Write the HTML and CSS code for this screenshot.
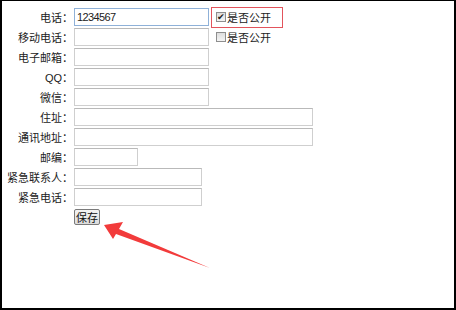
FILE: index.html
```html
<!DOCTYPE html>
<html lang="zh-CN">
<head>
    <meta charset="UTF-8">
    <title>联系方式</title>
    <link rel="stylesheet" href="styles.css">
</head>
<body>

<div class="frame">
    <div class="form">
        <div class="row">
            <label class="label">电话：</label>
            <input class="field field-focus w-md" type="text" value="1234567">
            <span class="public public-marked">
                <input type="checkbox" checked>是否公开
            </span>
        </div>
        <div class="row">
            <label class="label">移动电话：</label>
            <input class="field w-md" type="text">
            <span class="public">
                <input type="checkbox">是否公开
            </span>
        </div>
        <div class="row">
            <label class="label">电子邮箱：</label>
            <input class="field w-md" type="text">
        </div>
        <div class="row">
            <label class="label">QQ：</label>
            <input class="field w-md" type="text">
        </div>
        <div class="row">
            <label class="label">微信：</label>
            <input class="field w-md" type="text">
        </div>
        <div class="row">
            <label class="label">住址：</label>
            <input class="field w-lg" type="text">
        </div>
        <div class="row">
            <label class="label">通讯地址：</label>
            <input class="field w-lg" type="text">
        </div>
        <div class="row">
            <label class="label">邮编：</label>
            <input class="field w-xs" type="text">
        </div>
        <div class="row">
            <label class="label">紧急联系人：</label>
            <input class="field w-sm" type="text">
        </div>
        <div class="row">
            <label class="label">紧急电话：</label>
            <input class="field w-sm" type="text">
        </div>
        <div class="actions">
            <button class="save">保存</button>
        </div>
    </div>

    <!-- 标注箭头 -->
    <svg class="arrow" width="456" height="310" viewBox="0 0 456 310">
        <path d="M102,224 L121,221 L117,228 L208,267 L114,233 L111,238 Z" fill="#f23b3b"/>
    </svg>
</div>

</body>
</html>
```

FILE: styles.css
```css
body {
    margin: 0;
    background: #fff;
    font-family: "Liberation Sans", "Noto Sans CJK SC", sans-serif;
    font-size: 11px;
    color: #222;
}
.frame {
    position: relative;
    width: 456px;
    height: 310px;
    box-sizing: border-box;
    border: 2px solid #000;
    border-top-width: 1px;
    background: #fff;
}
.form {
    padding-top: 6px;
}
.row {
    display: flex;
    align-items: center;
    height: 20px;
}
.label {
    width: 71px;
    margin-right: 1px;
    text-align: right;
    white-space: nowrap;
}
.field {
    height: 18px;
    box-sizing: border-box;
    margin: 0;
    padding: 0 2px;
    border: 1px solid #cfcfcf;
    border-top-color: #b9b9b9;
    font-family: "Liberation Sans", sans-serif;
    font-size: 11px;
    letter-spacing: -0.6px;
    color: #222;
    background: #fff;
    outline: none;
}
.field-focus {
    border-color: #8fb1d8;
}
.w-xs { width: 64px; }
.w-sm { width: 128px; }
.w-md { width: 135px; }
.w-lg { width: 239px; }
.public {
    display: flex;
    align-items: center;
    height: 19px;
    margin-left: 7px;
    white-space: nowrap;
}
.public-marked {
    width: 72px;
    height: 21px;
    margin-left: 2px;
    padding-left: 4px;
    box-sizing: border-box;
    border: 1px solid #e2545c;
}
.public input {
    appearance: none;
    position: relative;
    width: 10px;
    height: 10px;
    box-sizing: border-box;
    margin: 0 1px 0 0;
    border: 1px solid #8e8e8e;
    background: linear-gradient(#dedede, #f4f4f4);
}
.public input:checked::after {
    content: "✔";
    position: absolute;
    left: 0;
    top: -2px;
    font-size: 9px;
    line-height: 12px;
    color: #222;
}
.actions {
    padding: 2px 0 0 72px;
}
.save {
    height: 16px;
    margin: 0;
    padding: 0 1px;
    border: 1px solid #7a7a7a;
    border-radius: 2px;
    background: linear-gradient(#f4f4f4, #dcdcdc);
    font-family: "Noto Sans CJK SC", sans-serif;
    font-size: 11px;
    line-height: 14px;
    color: #111;
}
.arrow {
    position: absolute;
    left: 0;
    top: 0;
    pointer-events: none;
}
```
